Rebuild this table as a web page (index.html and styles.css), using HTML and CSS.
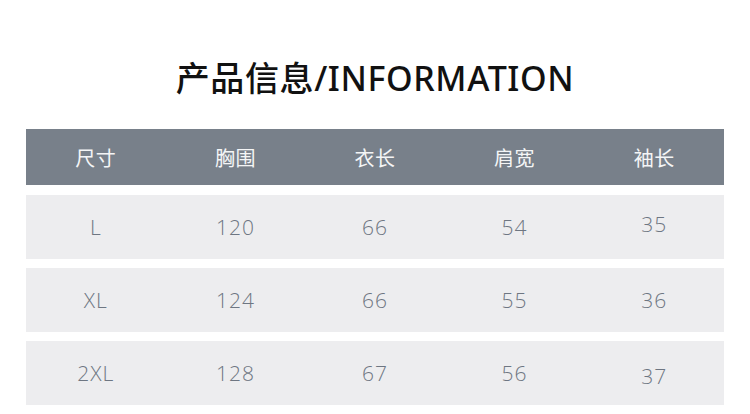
FILE: index.html
```html
<!DOCTYPE html>
<html lang="zh">
<head>
<meta charset="utf-8">
<link rel="stylesheet" href="styles.css">
</head>
<body>
<div class="page">
  <h1 class="title">产品信息/INFORMATION</h1>
  <div class="table">
    <div class="row head">
      <div class="cell">尺寸</div><div class="cell">胸围</div><div class="cell">衣长</div><div class="cell">肩宽</div><div class="cell">袖长</div>
    </div>
    <div class="row">
      <div class="cell">L</div><div class="cell">120</div><div class="cell">66</div><div class="cell">54</div><div class="cell up">35</div>
    </div>
    <div class="row">
      <div class="cell">XL</div><div class="cell">124</div><div class="cell">66</div><div class="cell">55</div><div class="cell">36</div>
    </div>
    <div class="row">
      <div class="cell">2XL</div><div class="cell">128</div><div class="cell">67</div><div class="cell">56</div><div class="cell down">37</div>
    </div>
  </div>
</div>
</body>
</html>
```
FILE: styles.css
```css
html, body {
  margin: 0;
  padding: 0;
  background: #ffffff;
}
.page {
  width: 750px;
  height: 414px;
  overflow: hidden;
  font-family: "Open Sans", "Noto Sans CJK SC", sans-serif;
}
.title {
  margin: 0;
  padding-top: 57px;
  height: 42px;
  line-height: 42px;
  text-align: center;
  font-family: "Noto Sans", "Noto Sans CJK SC", sans-serif;
  font-weight: 500;
  font-size: 34px;
  color: #111111;
  letter-spacing: 0.6px;
}
.table {
  margin: 30px 26px 0 26px;
  display: flex;
  flex-direction: column;
  gap: 9px;
}
.row {
  display: grid;
  grid-template-columns: repeat(5, 1fr);
  height: 64px;
  background: #ededef;
  color: #6e7682;
  font-size: 21px;
  font-weight: 300;
  letter-spacing: 1px;
}
.row.head {
  height: 56px;
  background: #78808a;
  color: #f4f5f6;
  font-size: 20px;
  font-weight: 400;
  letter-spacing: 0.5px;
  margin-bottom: 1px;
}
.cell {
  display: flex;
  align-items: center;
  justify-content: center;
}
.cell.up { padding-bottom: 6px; }
.cell.down { padding-top: 6px; }
```
